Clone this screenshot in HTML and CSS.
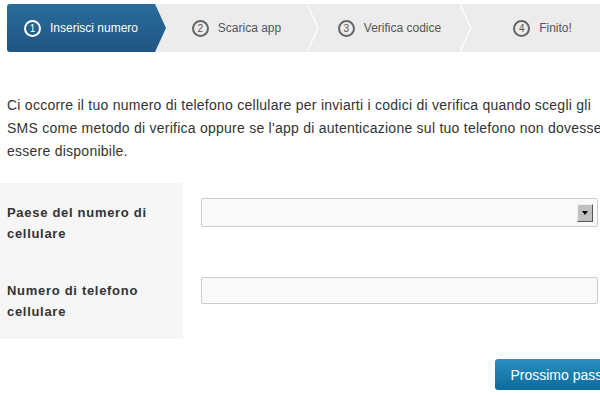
FILE: index.html
```html
<!DOCTYPE html>
<html lang="it">
<head>
  <meta charset="UTF-8">
  <title>Verifica in due passaggi</title>
  <link rel="stylesheet" href="styles.css">
</head>
<body>

<div class="page">
  <ol class="wizard">
    <li class="step active">
      <span class="num">1</span>
      <span class="label">Inserisci numero</span>
    </li>
    <li class="step">
      <span class="num">2</span>
      <span class="label">Scarica app</span>
      <svg class="sep" width="14" height="48" viewBox="0 0 14 48"><polyline points="1,0 12,24 1,48" fill="none" stroke="#fff" stroke-width="1.2"/></svg>
    </li>
    <li class="step">
      <span class="num">3</span>
      <span class="label">Verifica codice</span>
      <svg class="sep" width="14" height="48" viewBox="0 0 14 48"><polyline points="1,0 12,24 1,48" fill="none" stroke="#fff" stroke-width="1.2"/></svg>
    </li>
    <li class="step">
      <span class="num">4</span>
      <span class="label">Finito!</span>
    </li>
  </ol>

  <p class="intro">Ci occorre il tuo numero di telefono cellulare per inviarti i codici di verifica quando scegli gli SMS come metodo di verifica oppure se l'app di autenticazione sul tuo telefono non dovesse essere disponibile.</p>
</div>

<div class="form">
  <div class="row">
    <label class="row-label" for="country">Paese del numero di cellulare</label>
    <div class="row-field">
      <div class="select" id="country">
        <span class="select-btn"><span class="caret"></span></span>
      </div>
    </div>
  </div>
  <div class="row">
    <label class="row-label" for="phone">Numero di telefono cellulare</label>
    <div class="row-field">
      <input type="text" id="phone" class="text-input">
    </div>
  </div>
</div>

<div class="actions">
  <button class="btn-primary">Prossimo passo</button>
</div>

</body>
</html>
```

FILE: styles.css
```css
body {
  margin: 0;
  font-family: "Liberation Sans", Arial, sans-serif;
  color: #333;
  background: #fff;
  overflow: hidden;
}

.page {
  padding-left: 7px;
  width: 618px;
}

/* wizard steps */
.wizard {
  list-style: none;
  margin: 4px 0 0;
  padding: 0;
  display: flex;
  height: 48px;
  background: #ececec;
  border-radius: 3px 0 0 3px;
}
.step {
  position: relative;
  flex: 0 0 153px;
  display: flex;
  align-items: center;
  justify-content: center;
  gap: 9px;
  font-size: 12px;
  color: #555;
}
.step .num {
  width: 13px;
  height: 13px;
  border: 2px solid #666;
  border-radius: 50%;
  font-size: 10px;
  line-height: 13px;
  text-align: center;
  color: #555;
}
.step.active {
  flex-basis: 159px;
  padding-right: 11px;
  box-sizing: border-box;
  color: #fff;
  background: linear-gradient(#296c9a, #1f5583);
  border-radius: 3px 0 0 3px;
  clip-path: polygon(0 0, 148px 0, 100% 50%, 148px 100%, 0 100%);
  z-index: 1;
}
.step.active .num {
  border-color: #fff;
  color: #fff;
}
.step.active + .step {
  margin-left: -6px;
}
.sep {
  position: absolute;
  right: -7px;
  top: 0;
}

.intro {
  width: 612px;
  margin: 42px 0 0;
  font-size: 14px;
  letter-spacing: 0.25px;
  line-height: 23px;
  color: #333;
}

/* form */
.form {
  margin-top: 20px;
}
.row {
  display: flex;
  height: 78px;
}
.row-label {
  flex: 0 0 183px;
  box-sizing: border-box;
  padding: 19px 20px 0 7px;
  background: #f6f6f6;
  font-size: 13px;
  font-weight: bold;
  letter-spacing: 0.7px;
  line-height: 21px;
  color: #333;
}
.row-field {
  padding: 15px 0 0 18px;
}
.select, .text-input {
  display: block;
  box-sizing: border-box;
  width: 397px;
  margin: 0;
  border: 1px solid #ccc;
  border-radius: 2px;
  background: #f9f9f9;
}
.select {
  height: 29px;
  position: relative;
}
.text-input {
  height: 27px;
  margin-top: 1px;
}
.select-btn {
  position: absolute;
  right: 4px;
  top: 5px;
  width: 16px;
  height: 18px;
  box-sizing: border-box;
  background: #c0c0c0;
  border: 1px solid;
  border-color: #f0f0f0 #555 #555 #f0f0f0;
  display: flex;
  align-items: center;
  justify-content: center;
}
.caret {
  width: 0;
  height: 0;
  border-left: 3px solid transparent;
  border-right: 3px solid transparent;
  border-top: 4px solid #000;
}

.actions {
  width: 625px;
  display: flex;
  justify-content: flex-end;
  margin-top: 20px;
}
.btn-primary {
  height: 31px;
  padding: 0 15px;
  border: none;
  border-radius: 3px;
  background: linear-gradient(#2a8fc2, #0e6b9a);
  color: #fff;
  font-family: "Liberation Sans", Arial, sans-serif;
  font-size: 14px;
}
```
